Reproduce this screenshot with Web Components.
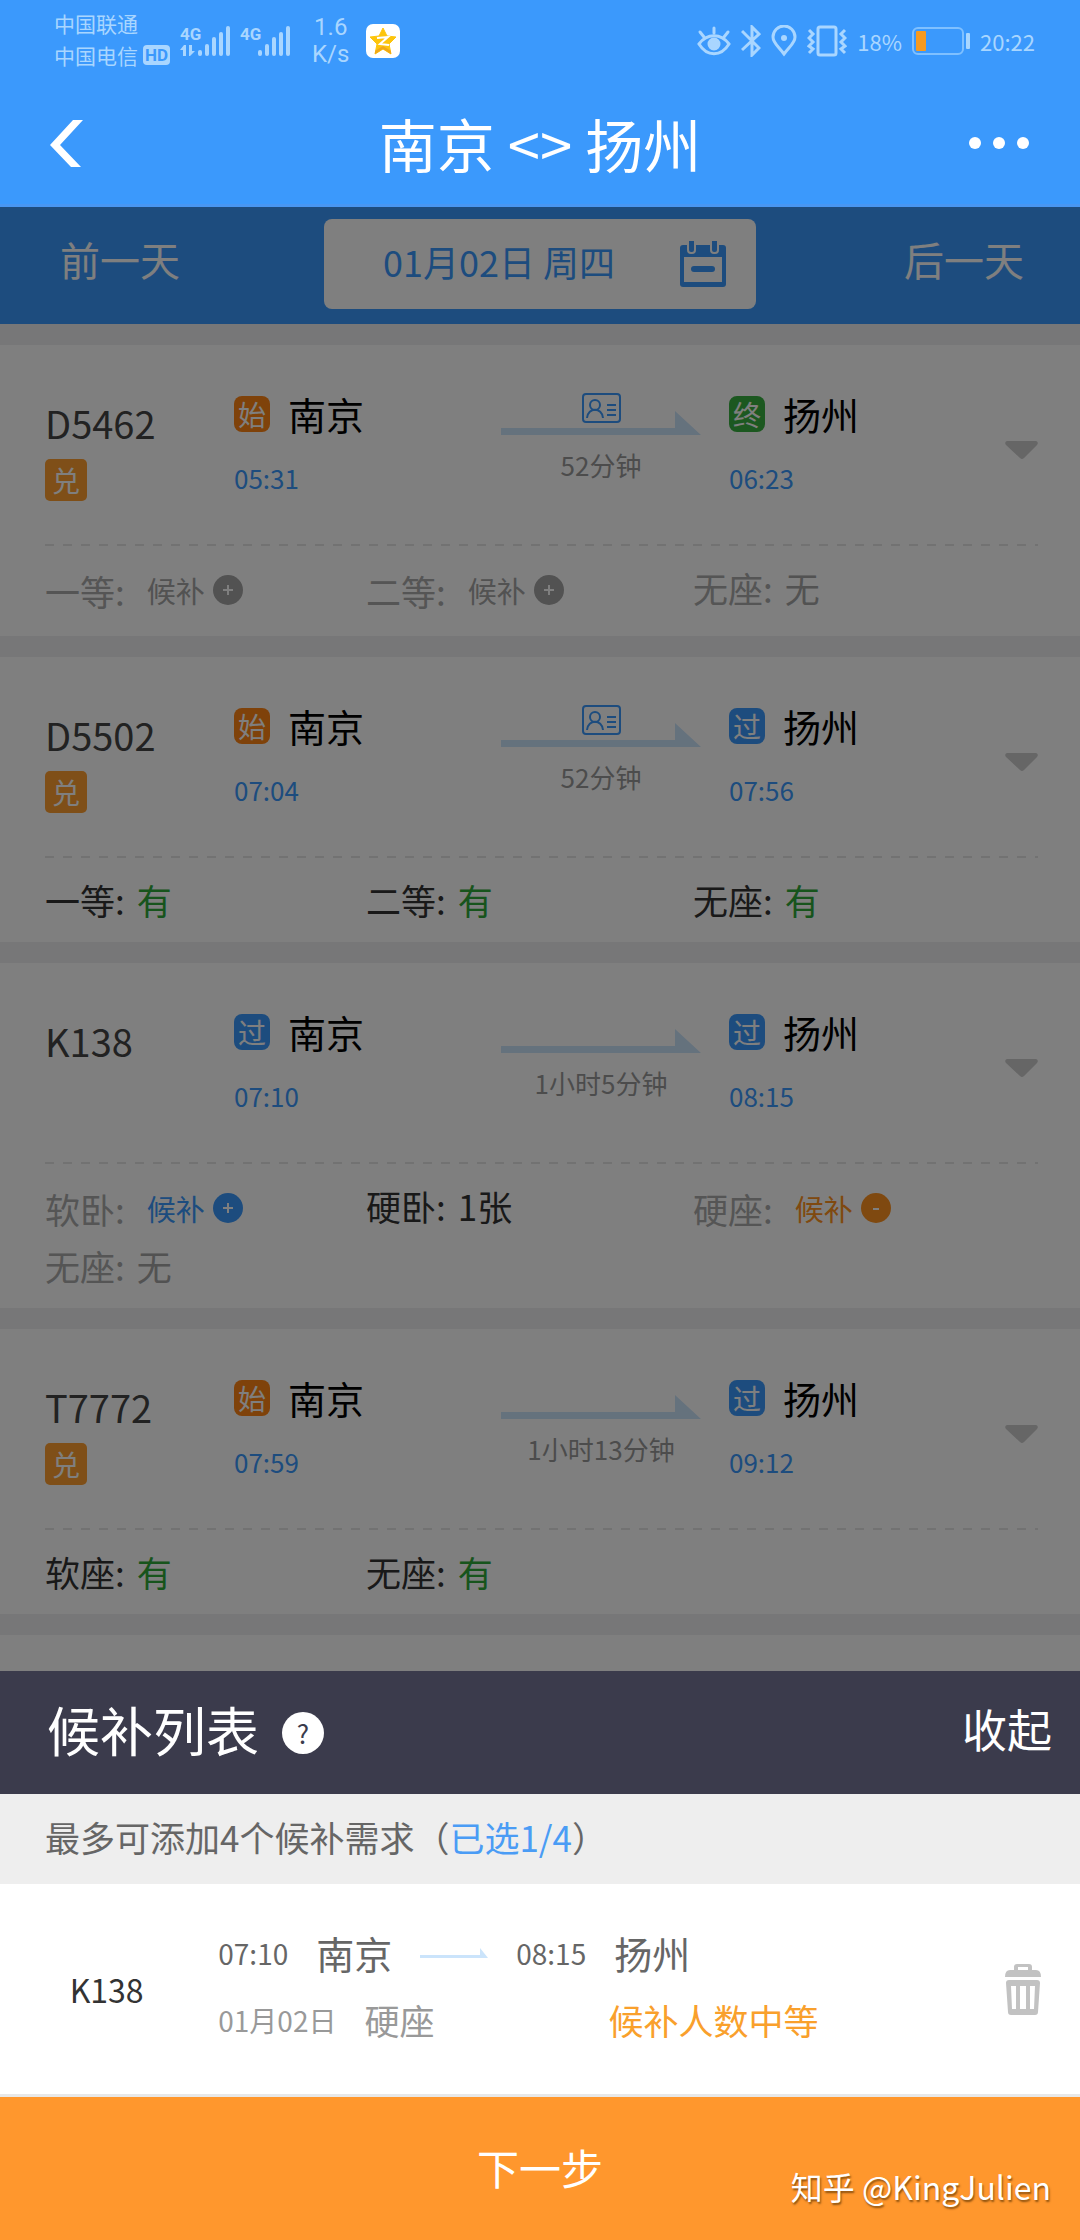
<!DOCTYPE html>
<html lang="zh-CN">
<head>
<meta charset="utf-8">
<meta name="viewport" content="width=device-width, initial-scale=1">
<title>南京 - 扬州</title>
<style>
    body{
        margin: 0;
        font-family: "Noto Sans CJK SC", sans-serif;
        color: #444;
    }
</style>
</head>
<body>
<ticket-page>
    <status-bar slot="top"></status-bar>
    <nav-bar slot="top">南京 &lt;&gt; 扬州</nav-bar>

    <date-bar>01月02日 周四</date-bar>

    <train-card code="D5462" exchange card from-tag="始" from="南京" start="05:31" to-tag="终" to="扬州" end="06:23" duration="52分钟">
        <seat-item label="一等" state="off" action="+">候补</seat-item>
        <seat-item label="二等" state="off" action="+">候补</seat-item>
        <seat-item label="无座" state="none">无</seat-item>
    </train-card>

    <train-card code="D5502" exchange card from-tag="始" from="南京" start="07:04" to-tag="过" to="扬州" end="07:56" duration="52分钟">
        <seat-item label="一等" state="yes">有</seat-item>
        <seat-item label="二等" state="yes">有</seat-item>
        <seat-item label="无座" state="yes">有</seat-item>
    </train-card>

    <train-card code="K138" from-tag="过" from="南京" start="07:10" to-tag="过" to="扬州" end="08:15" duration="1小时5分钟">
        <seat-item label="软卧" state="add" action="+">候补</seat-item>
        <seat-item label="硬卧" state="few">1张</seat-item>
        <seat-item label="硬座" state="added" action="-">候补</seat-item>
        <seat-item label="无座" state="none">无</seat-item>
    </train-card>

    <train-card code="T7772" exchange from-tag="始" from="南京" start="07:59" to-tag="过" to="扬州" end="09:12" duration="1小时13分钟">
        <seat-item label="软座" state="yes">有</seat-item>
        <seat-item label="无座" state="yes">有</seat-item>
    </train-card>

    <wait-panel slot="bottom">
        <span slot="title">候补列表</span>
        <span slot="tip">最多可添加4个候补需求（<b>已选1/4</b>）</span>
        <wait-item code="K138" start="07:10" from="南京" end="08:15" to="扬州" date="01月02日" seat="硬座">候补人数中等</wait-item>
    </wait-panel>
    <span slot="mark">知乎 @KingJulien</span>
</ticket-page>

<script>
/** Page frame: the top bars, the dimmed list and the panel at the bottom */
class TicketPage extends HTMLElement{
    constructor(){
        super();
        this.attachShadow({mode:'open'});
        this.shadowRoot.innerHTML = `
            <style>
                :host{
                    display: flex;
                    flex-direction: column;
                    min-height: 100vh;
                    position: relative;
                }
                main{
                    flex: 1;
                    display: flex;
                    flex-direction: column;
                    position: relative;
                    background-color: #eeeef1;
                }
                .next-card{
                    flex: 1;
                    margin-top: 21px;
                    background-color: #fff;
                }
                .mask{
                    position: absolute;
                    inset: 0;
                    background-color: rgba(0,0,0,.5);
                }
                ::slotted([slot="mark"]){
                    position: absolute;
                    right: 29px;
                    bottom: 32px;
                    color: #fff;
                    font: 32px/44px "Noto Sans CJK SC", sans-serif;
                    text-shadow: 1px 2px 2px rgba(90,50,0,.7);
                    pointer-events: none;
                }
            </style>
            <slot name="top"></slot>
            <main>
                <slot></slot>
                <div class="next-card"></div>
                <div class="mask"></div>
            </main>
            <slot name="bottom"></slot>
            <slot name="mark"></slot>
        `;
    }
}

class StatusBar extends HTMLElement{
    constructor(){
        super();
        this.attachShadow({mode:'open'});
        this.shadowRoot.innerHTML = `
            <style>
                :host{
                    display: flex;
                    align-items: center;
                    justify-content: space-between;
                    height: 82px;
                    padding: 0 45px 0 54px;
                    background-color: #3b99fc;
                    color: #a9d6ff;
                }
                .side, .line{
                    display: flex;
                    align-items: center;
                }
                .carrier{
                    padding-bottom: 4px;
                    font-size: 21px;
                    line-height: 32px;
                }
                .line{
                    gap: 5px;
                }
                .hd{
                    padding: 0 2px;
                    border-radius: 4px;
                    background-color: #a9d6ff;
                    color: #3b99fc;
                    font: bold 17px/20px Roboto, sans-serif;
                }
                .speed{
                    margin: 0 17px 0 20px;
                    font: 24px/27px Roboto, sans-serif;
                    text-align: center;
                }
                .signal{
                    margin-left: 10px;
                }
                .right{
                    gap: 10px;
                }
                .level, .clock{
                    font-size: 22px;
                }
                svg{
                    display: block;
                }
            </style>
            <div class="side">
                <div class="carrier">
                    <div>中国联通</div>
                    <div class="line">中国电信<span class="hd">HD</span></div>
                </div>
                <svg class="signal" width="50" height="32" viewBox="0 0 50 32" fill="currentColor">
                    <text x="0" y="15" font-family="Roboto" font-weight="bold" font-size="17">4G</text>
                    <path d="M4 20l-4 5h3v6h3V20zM9 20h3v6h3l-5 5H9z"/>
                    <rect x="18" y="25" width="4" height="6" rx="2"/><rect x="25" y="19" width="4" height="12" rx="2"/>
                    <rect x="32" y="12" width="4" height="19" rx="2"/><rect x="39" y="7" width="4" height="24" rx="2"/>
                    <rect x="46" y="1" width="4" height="30" rx="2"/>
                </svg>
                <svg class="signal" width="52" height="32" viewBox="0 0 52 32" fill="currentColor">
                    <text x="0" y="15" font-family="Roboto" font-weight="bold" font-size="17">4G</text>
                    <rect x="18" y="25" width="4" height="6" rx="2"/><rect x="25" y="19" width="4" height="12" rx="2"/>
                    <rect x="32" y="12" width="4" height="19" rx="2"/><rect x="39" y="7" width="4" height="24" rx="2"/>
                    <rect x="46" y="1" width="4" height="30" rx="2"/>
                </svg>
                <div class="speed">1.6<br>K/s</div>
                <svg width="34" height="34" viewBox="0 0 34 34">
                    <rect width="34" height="34" rx="7" fill="#fff"/>
                    <path d="M17 4l4 8 9 1-7 7 2 10-8-5-8 5 2-10-7-7 9-1z" fill="#fdc50c" stroke="#fdc50c" stroke-width="1" stroke-linejoin="round"/>
                    <path d="M9 27l8-5 8 5v3l-8-5-8 5z" fill="#f0a818"/>
                    <path d="M11 14l11-1-8 7 9 1" fill="none" stroke="#fff" stroke-width="2"/>
                </svg>
            </div>
            <div class="side right">
                <svg width="34" height="32" viewBox="0 0 34 32" fill="none" stroke="currentColor" stroke-width="3" stroke-linecap="round">
                    <path d="M2 19c8-11 22-11 30 0-8 13-22 13-30 0z"/>
                    <circle cx="17" cy="19" r="5" fill="currentColor"/>
                    <path d="M17 3v5M3 7l4 5M31 7l-4 5"/>
                </svg>
                <svg width="20" height="32" viewBox="0 0 20 32" fill="none" stroke="currentColor" stroke-width="3">
                    <path d="M1 6l17 17-7 7V2l7 7L1 25"/>
                </svg>
                <svg width="26" height="32" viewBox="0 0 26 32" fill="none" stroke="currentColor" stroke-width="3">
                    <path d="M13 29C7 21 2 18 2 12a11 11 0 0 1 22 0c0 6-5 9-11 17z"/>
                    <circle cx="13" cy="13" r="3" fill="currentColor" stroke="none"/>
                </svg>
                <svg width="40" height="32" viewBox="0 0 40 32" fill="none" stroke="currentColor" stroke-width="3">
                    <rect x="11" y="2" width="18" height="28" rx="2"/>
                    <path d="M2 5l4 4-4 4 4 4-4 4 4 3-4 4M38 5l-4 4 4 4-4 4 4 4-4 3 4 4"/>
                </svg>
                <span class="level">18%</span>
                <svg width="58" height="28" viewBox="0 0 58 28">
                    <rect x="1" y="1" width="50" height="26" rx="5" fill="none" stroke="#7fc0ff" stroke-width="2"/>
                    <rect x="4" y="4" width="10" height="20" rx="1" fill="#f79a1f"/>
                    <rect x="54" y="6" width="4" height="16" rx="1" fill="#a9d6ff"/>
                </svg>
                <span class="clock">20:22</span>
            </div>
        `;
    }
}

class NavBar extends HTMLElement{
    constructor(){
        super();
        this.attachShadow({mode:'open'});
        this.shadowRoot.innerHTML = `
            <style>
                :host{
                    display: grid;
                    grid-template-columns: 1fr auto 1fr;
                    align-items: center;
                    height: 122px;
                    padding: 0 50px;
                    border-bottom: 3px solid #4896f2;
                    background-color: #3b99fc;
                    color: #fff;
                }
                h1{
                    margin: 0;
                    font-size: 58px;
                    font-weight: 400;
                    line-height: 72px;
                }
                button{
                    padding: 0;
                    border: 0;
                    background: none;
                    color: inherit;
                    justify-self: start;
                }
                button:last-child{
                    justify-self: end;
                }
                svg{
                    display: block;
                }
            </style>
            <button aria-label="返回">
                <svg width="33" height="47" viewBox="0 0 33 47" fill="currentColor"><path d="M23 0h10L10 25l21 22H21L0 25z"/></svg>
            </button>
            <h1><slot></slot></h1>
            <button aria-label="更多">
                <svg width="62" height="14" viewBox="0 0 62 14" fill="currentColor">
                    <circle cx="7" cy="7" r="6"/><circle cx="31" cy="7" r="6"/><circle cx="55" cy="7" r="6"/>
                </svg>
            </button>
        `;
    }
}

class DateBar extends HTMLElement{
    constructor(){
        super();
        this.attachShadow({mode:'open'});
        this.shadowRoot.innerHTML = `
            <style>
                :host{
                    display: grid;
                    grid-template-columns: 3fr 4fr 3fr;
                    align-items: center;
                    padding: 12px 0 15px;
                    background-color: #3b99fc;
                }
                button{
                    border: 0;
                    padding: 0 0 10px;
                    background: none;
                    color: #fff;
                    font-family: inherit;
                    font-size: 40px;
                    line-height: 48px;
                }
                .prev{
                    justify-self: start;
                    margin-left: 60px;
                }
                .next{
                    justify-self: end;
                    margin-right: 56px;
                }
                .date{
                    display: flex;
                    align-items: center;
                    justify-content: space-between;
                    height: 90px;
                    padding: 0 30px 0 59px;
                    border-radius: 8px;
                    background-color: #fff;
                    color: #3b99fc;
                    font-size: 36px;
                }
                .day{
                    padding-bottom: 6px;
                }
            </style>
            <button class="prev">前一天</button>
            <button class="date">
                <span class="day"><slot></slot></span>
                <svg width="46" height="46" viewBox="0 0 46 46">
                    <path d="M3 4h40q3 0 3 3v36q0 3-3 3H3q-3 0-3-3V7q0-3 3-3z" fill="#3b99fc"/>
                    <rect x="4" y="16" width="38" height="25" fill="#fff"/>
                    <rect x="8" y="-3" width="7" height="15" rx="3" fill="#3b99fc" stroke="#fff" stroke-width="2"/>
                    <rect x="31" y="-3" width="7" height="15" rx="3" fill="#3b99fc" stroke="#fff" stroke-width="2"/>
                    <rect x="11" y="25" width="24" height="6" rx="3" fill="#3b99fc"/>
                </svg>
            </button>
            <button class="next">后一天</button>
        `;
    }
}

/** Small square that tells if the station is the first, the last or a passing one */
class StationTag extends HTMLElement{
    constructor(){
        super();
        this.attachShadow({mode:'open'});
        this.shadowRoot.innerHTML = `
            <style>
                :host{
                    display: inline-block;
                    width: 36px;
                    border-radius: 8px;
                    background-color: #3b99fc;
                    color: #fff;
                    font-size: 28px;
                    line-height: 36px;
                    text-align: center;
                }
                :host([type="始"]){
                    background-color: #ff8414;
                }
                :host([type="终"]){
                    background-color: #38b040;
                }
            </style>
            <slot></slot>
        `;
    }
}

class TrainCard extends HTMLElement{
    constructor(){
        super();
        this.attachShadow({mode:'open'});
    }

    /**Markup of one end of the trip */
    _station(tag, name, time){
        return `
            <div class="station">
                <div class="name"><station-tag type="${tag}">${tag}</station-tag>${name}</div>
                <div class="time">${time}</div>
            </div>
        `;
    }

    connectedCallback(){
        const attr = name => this.getAttribute(name);
        this.shadowRoot.innerHTML = `
            <style>
                :host{
                    display: block;
                    margin-top: 21px;
                    background-color: #fff;
                }
                .trip{
                    display: grid;
                    grid-template-columns: 189fr 267fr 228fr 276fr 33px;
                    align-items: start;
                    padding: 45px 42px 42px 45px;
                }
                .code{
                    padding-top: 9px;
                    font-size: 38px;
                    line-height: 48px;
                }
                .exchange{
                    width: 42px;
                    margin-top: 12px;
                    border-radius: 5px;
                    background-color: #ff9f30;
                    color: #fff;
                    font-size: 28px;
                    line-height: 42px;
                    text-align: center;
                }
                .name{
                    display: flex;
                    align-items: center;
                    gap: 18px;
                    color: #000;
                    font-size: 38px;
                    line-height: 48px;
                }
                .time{
                    margin-top: 16px;
                    color: #3b99fc;
                    font-size: 26px;
                    line-height: 48px;
                }
                .middle{
                    display: grid;
                    width: 200px;
                    padding-top: 3px;
                    justify-items: center;
                    color: #999;
                    font-size: 26px;
                    line-height: 40px;
                    row-gap: 10px;
                }
                .route, .id{
                    grid-area: 1 / 1;
                }
                .route{
                    padding-top: 18px;
                }
                button{
                    margin-top: 51px;
                    padding: 0;
                    border: 0;
                    background: none;
                }
                svg{
                    display: block;
                }
                .dash{
                    height: 2px;
                    margin: 0 42px 0 45px;
                    background: repeating-linear-gradient(90deg, #e4e4e4 0 9px, transparent 9px 18px);
                }
                .seats{
                    display: grid;
                    grid-template-columns: 321fr 327fr 345fr;
                    padding: 14px 42px 16px 45px;
                }
            </style>
            <div class="trip">
                <div class="code">${attr('code')}${this.hasAttribute('exchange') ? '<div class="exchange">兑</div>' : ''}</div>
                ${this._station(attr('from-tag'), attr('from'), attr('start'))}
                <div class="middle">
                    <svg class="route" width="200" height="24" viewBox="0 0 200 24" fill="#cbe4fb"><path d="M0 17h174V0l26 24H0z"/></svg>
                    ${this.hasAttribute('card') ? `
                    <svg class="id" width="39" height="30" viewBox="0 0 39 30" fill="none" stroke="#3b99fc" stroke-width="2">
                        <rect x="1" y="1" width="37" height="28" rx="3"/>
                        <circle cx="13" cy="12" r="5"/>
                        <path d="M5 25c1-11 15-11 16 0M25 12h9M25 17h9M25 22h9"/>
                    </svg>` : ''}
                    <div>${attr('duration')}</div>
                </div>
                ${this._station(attr('to-tag'), attr('to'), attr('end'))}
                <button aria-label="展开">
                    <svg width="33" height="18" viewBox="0 0 33 18" fill="#ccc"><path d="M2 0h29q3 1 1 4L19 17q-2 2-4 0L1 4Q-1 1 2 0z"/></svg>
                </button>
            </div>
            <div class="dash"></div>
            <div class="seats"><slot></slot></div>
        `;
    }
}

/** One seat class. The action attribute adds the round button that joins or leaves the wait list */
class SeatItem extends HTMLElement{
    constructor(){
        super();
        this.attachShadow({mode:'open'});
    }

    connectedCallback(){
        const action = this.getAttribute('action');
        const sign = action === '+' ? 'M10 15h10M15 10v10' : 'M12 16h6';
        this.shadowRoot.innerHTML = `
            <style>
                :host{
                    --state: #333;
                    display: flex;
                    align-items: center;
                    gap: 12px;
                    height: 54px;
                    color: #333;
                    font-size: 35px;
                }
                :host([action]){
                    gap: 22px;
                    height: 60px;
                }
                :host([action]), :host([state="none"]){
                    color: #aaa;
                }
                :host([state="none"]), :host([state="off"]){
                    --state: #a4a4a4;
                }
                :host([state="yes"]){
                    --state: #2fa838;
                }
                :host([state="add"]){
                    --state: #3b99fc;
                }
                :host([state="added"]){
                    --state: #ff9320;
                }
                .value{
                    display: flex;
                    align-items: center;
                    gap: 8px;
                    color: var(--state);
                }
                :host([action]) .value{
                    font-size: 29px;
                }
                button{
                    padding: 0;
                    border: 0;
                    background: none;
                    color: inherit;
                }
                svg{
                    display: block;
                }
            </style>
            <span>${this.getAttribute('label')}:</span>
            <span class="value">
                <slot></slot>
                ${action ? `<button aria-label="${action === '+' ? '添加' : '移除'}">
                    <svg width="30" height="30" viewBox="0 0 30 30"><circle cx="15" cy="15" r="15" fill="currentColor"/><path d="${sign}" stroke="#fff" stroke-width="2"/></svg>
                </button>` : ''}
            </span>
        `;
    }
}

class WaitPanel extends HTMLElement{
    constructor(){
        super();
        this.attachShadow({mode:'open'});
        this.shadowRoot.innerHTML = `
            <style>
                :host{
                    display: block;
                    background-color: #fff;
                }
                header{
                    display: flex;
                    align-items: center;
                    height: 123px;
                    padding: 0 28px 0 47px;
                    background-color: #3b3b4c;
                    color: #fff;
                }
                h2{
                    margin: 0;
                    padding-bottom: 8px;
                    font-size: 53px;
                    font-weight: 400;
                    line-height: 72px;
                }
                button{
                    padding: 0;
                    border: 0;
                    background: none;
                    color: inherit;
                    font-family: inherit;
                }
                .help{
                    width: 42px;
                    height: 42px;
                    margin-left: 23px;
                    border-radius: 50%;
                    background-color: #fff;
                    color: #3b3b4c;
                    font-size: 26px;
                    line-height: 42px;
                }
                .fold{
                    margin-left: auto;
                    padding-bottom: 8px;
                    font-size: 45px;
                }
                .tip{
                    padding: 0 45px 4px;
                    background-color: #eee;
                    color: #666;
                    font-size: 35px;
                    line-height: 86px;
                }
                ::slotted([slot="tip"]){
                    --picked: #4a9cf5;
                }
                .next{
                    display: block;
                    width: 100%;
                    height: 146px;
                    padding-bottom: 4px;
                    border-top: 3px solid #e8e8e8;
                    background-color: #ff972d;
                    color: #fff;
                    font-size: 42px;
                }
            </style>
            <header>
                <h2><slot name="title"></slot></h2>
                <button class="help" aria-label="帮助">?</button>
                <button class="fold">收起</button>
            </header>
            <div class="tip"><slot name="tip"></slot></div>
            <slot></slot>
            <button class="next">下一步</button>
        `;
    }

    connectedCallback(){
        //The picked count is nested in the slotted text, ::slotted can't reach it
        this.querySelectorAll('b').forEach(b => {
            b.style.fontWeight = '400';
            b.style.color = 'var(--picked)';
        });
    }
}

class WaitItem extends HTMLElement{
    constructor(){
        super();
        this.attachShadow({mode:'open'});
    }

    connectedCallback(){
        const attr = name => this.getAttribute(name);
        this.shadowRoot.innerHTML = `
            <style>
                :host{
                    display: grid;
                    grid-template-columns: 212fr 787fr 36px;
                    align-items: center;
                    height: 210px;
                    padding-right: 39px;
                }
                .code{
                    color: #333;
                    font-size: 32px;
                    text-align: center;
                }
                .info{
                    display: grid;
                    row-gap: 19px;
                    padding: 0 0 6px 5px;
                    line-height: 48px;
                }
                .trip{
                    display: flex;
                    align-items: center;
                    gap: 28px;
                    color: #666;
                    font-size: 38px;
                }
                .time{
                    font-size: 28px;
                }
                .detail{
                    display: grid;
                    grid-template-columns: 388fr 394fr;
                    align-items: center;
                    color: #999;
                }
                .when{
                    display: flex;
                    align-items: center;
                    gap: 28px;
                    font-size: 35px;
                }
                .date{
                    font-size: 28px;
                }
                .hint{
                    color: #f9a02c;
                    font-size: 35px;
                }
                button{
                    padding: 0;
                    border: 0;
                    background: none;
                }
                svg{
                    display: block;
                }
            </style>
            <div class="code">${attr('code')}</div>
            <div class="info">
                <div class="trip">
                    <span class="time">${attr('start')}</span><span>${attr('from')}</span>
                    <svg width="68" height="10" viewBox="0 0 68 10" fill="#cbe4fb"><path d="M0 7h60V0l8 10H0z"/></svg>
                    <span class="time">${attr('end')}</span><span>${attr('to')}</span>
                </div>
                <div class="detail">
                    <div class="when"><span class="date">${attr('date')}</span><span>${attr('seat')}</span></div>
                    <div class="hint"><slot></slot></div>
                </div>
            </div>
            <button aria-label="删除">
                <svg width="36" height="51" viewBox="0 0 36 51" fill="#c2c2c2">
                    <path fill-rule="evenodd" d="M9 6V3q0-3 3-3h12q3 0 3 3v3h4q5 0 5 7H0q0-7 5-7zM13 6h10V3H13z"/>
                    <path fill-rule="evenodd" d="M4 16h28q3 0 3 3l-2 29q0 3-3 3H6q-3 0-3-3L1 19q0-3 3-3zM6 22l1 23h4V22zM15 22v23h6V22zM25 22v23h4l1-23z"/>
                </svg>
            </button>
        `;
    }
}

customElements.define('ticket-page',TicketPage)
customElements.define('status-bar',StatusBar)
customElements.define('nav-bar',NavBar)
customElements.define('date-bar',DateBar)
customElements.define('station-tag',StationTag)
customElements.define('train-card',TrainCard)
customElements.define('seat-item',SeatItem)
customElements.define('wait-panel',WaitPanel)
customElements.define('wait-item',WaitItem)
</script>
</body>
</html>
